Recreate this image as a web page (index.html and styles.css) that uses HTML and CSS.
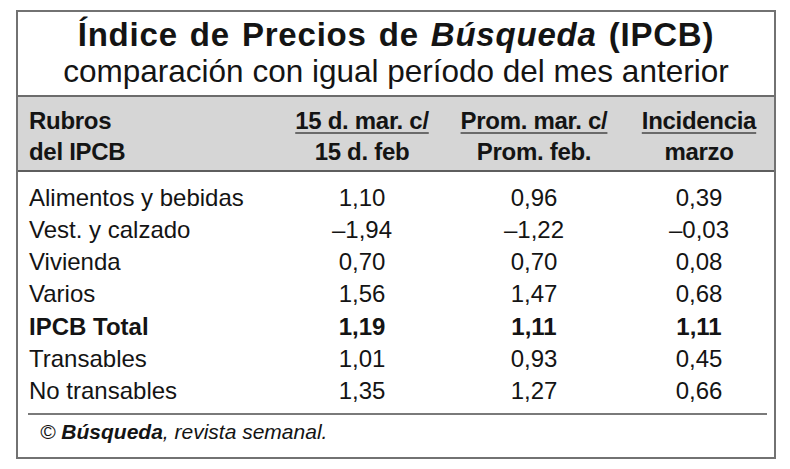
FILE: index.html
```html
<!DOCTYPE html>
<html lang="es">
<head>
<meta charset="utf-8">
<title>Índice de Precios de Búsqueda (IPCB)</title>
<link rel="stylesheet" href="styles.css">
</head>
<body>
<div class="box">
  <div class="titles">
    <h1 class="title">Índice de Precios de <em>Búsqueda</em> (IPCB)</h1>
    <p class="subtitle">comparación con igual período del mes anterior</p>
  </div>
  <div class="head grid">
    <div class="lab">Rubros<br>del IPCB</div>
    <div class="num"><span class="ul">15 d. mar. c/</span><br>15 d. feb</div>
    <div class="num"><span class="ul">Prom. mar. c/</span><br>Prom. feb.</div>
    <div class="num"><span class="ul">Incidencia</span><br>marzo</div>
  </div>
  <div class="body">
    <div class="grid row"><div class="lab">Alimentos y bebidas</div><div class="num">1,10</div><div class="num">0,96</div><div class="num">0,39</div></div>
    <div class="grid row"><div class="lab">Vest. y calzado</div><div class="num">–1,94</div><div class="num">–1,22</div><div class="num">–0,03</div></div>
    <div class="grid row"><div class="lab">Vivienda</div><div class="num">0,70</div><div class="num">0,70</div><div class="num">0,08</div></div>
    <div class="grid row"><div class="lab">Varios</div><div class="num">1,56</div><div class="num">1,47</div><div class="num">0,68</div></div>
    <div class="grid row total"><div class="lab">IPCB Total</div><div class="num">1,19</div><div class="num">1,11</div><div class="num">1,11</div></div>
    <div class="grid row"><div class="lab">Transables</div><div class="num">1,01</div><div class="num">0,93</div><div class="num">0,45</div></div>
    <div class="grid row"><div class="lab">No transables</div><div class="num">1,35</div><div class="num">1,27</div><div class="num">0,66</div></div>
  </div>
  <div class="foot">© <b>Búsqueda</b>, revista semanal.</div>
</div>
</body>
</html>
```
FILE: styles.css
```css
html, body {
  margin: 0;
  padding: 0;
  background: #ffffff;
}
body {
  font-family: "Liberation Sans", Arial, sans-serif;
  color: #141414;
}
.box {
  margin: 10px 0 0 16px;
  width: 756px;
  border: 2px solid #727272;
  background: #ffffff;
}
.titles {
  text-align: center;
  padding: 5px 0 5px;
  border-bottom: 2px solid #6c6c6c;
}
.title {
  margin: 0;
  font-size: 33px;
  line-height: 35px;
  font-weight: bold;
  letter-spacing: 0.8px;
  word-spacing: 2px;
}
.title em {
  font-style: italic;
}
.subtitle {
  margin: 0;
  font-size: 31.5px;
  line-height: 38px;
  font-weight: normal;
}
.grid {
  display: grid;
  grid-template-columns: 262px 142px 202px 128px;
  padding-left: 11px;
}
.head {
  background: #d6d6d6;
  font-weight: bold;
  font-size: 24px;
  line-height: 31px;
  padding-top: 8px;
  padding-bottom: 3px;
  border-bottom: 2px solid #5e5e5e;
  letter-spacing: -0.3px;
}
.num {
  text-align: center;
}
.ul {
  text-decoration: underline;
  text-decoration-thickness: 2px;
  text-decoration-color: #6a6a6a;
  text-underline-offset: 3px;
}
.body {
  padding-top: 9.5px;
  padding-bottom: 5px;
}
.row {
  font-size: 24px;
  line-height: 32.3px;
  height: 32.3px;
}
.total {
  font-weight: bold;
}
.foot {
  margin: 0 7px 0 10px;
  border-top: 2px solid #7a7a7a;
  padding: 4px 0 13px 12px;
  font-size: 21px;
  line-height: 25px;
  font-style: italic;
}
```
